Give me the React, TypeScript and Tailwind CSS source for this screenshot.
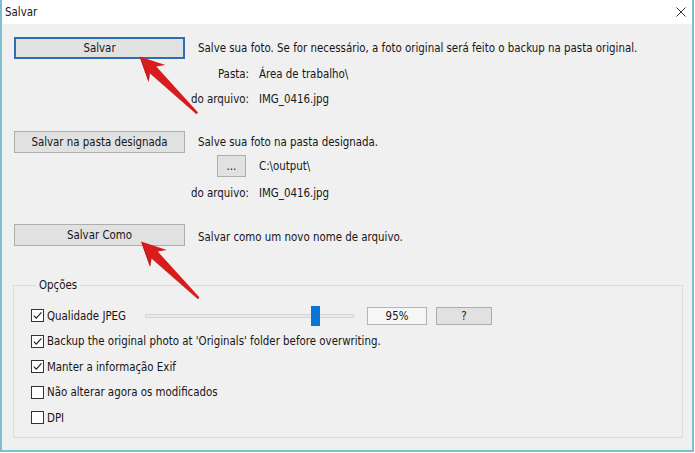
function Check({ checked }: { checked: boolean }) {
  return (
    <span className="w-[13px] h-[13px] border border-[#333] bg-white flex items-center justify-center shrink-0">
      {checked && (
        <svg width="11" height="11" viewBox="0 0 11 11">
          <polyline points="1.8,5.6 4.3,8.2 9.4,2.4" fill="none" stroke="#222" strokeWidth="1.2" />
        </svg>
      )}
    </span>
  );
}

function Row({ checked, label }: { checked: boolean; label: string }) {
  return (
    <div className="h-[25.5px] flex items-center">
      <Check checked={checked} />
      <span className="ml-[3px] whitespace-nowrap">{label}</span>
    </div>
  );
}

function Arrow({ x, y }: { x: number; y: number }) {
  return (
    <g transform={`translate(${x} ${y}) rotate(44.5)`}>
      <path d="M0 0 L24.5 -12 L19 -4.6 L81 -1.1 L81 1.1 L19 4.6 L24.5 12 Z" fill="#d81c1c" />
      <path d="M2 0.5 L23 10.5 L19 4.6 L81 1.1" fill="none" stroke="#a70f10" strokeWidth="0.8" opacity="0.6" />
    </g>
  );
}

export default function App() {
  return (
    <div className="w-[695px] h-[453px] bg-white relative">
      <div className="w-[694px] h-[452px] border-l-2 border-r-2 border-b-2 border-[#7cc0cd] flex flex-col font-['DejaVu_Sans',sans-serif] font-stretch-condensed text-[11.4px] text-[#161616] leading-[14px]">
        <div className="h-[24px] bg-white flex items-center justify-between pl-[3px] pr-[6px] shrink-0">
          <span>Salvar</span>
          <svg width="10" height="10" viewBox="0 0 10 10">
            <path d="M0.5 0.5 L9.5 9.5 M9.5 0.5 L0.5 9.5" stroke="#333" strokeWidth="1" />
          </svg>
        </div>
        <div className="flex-1 bg-[#f0f0f0] pt-[13px] pl-[12px] flex flex-col">
          <div className="h-[22px] flex items-center">
            <button className="w-[171px] h-[22px] border-2 border-[#2f6db5] bg-[#e1e1e1] flex items-center justify-center">Salvar</button>
            <span className="ml-[13px] whitespace-nowrap">Salve sua foto. Se for necessário, a foto original será feito o backup na pasta original.</span>
          </div>
          <div className="mt-[3px] h-[24px] flex items-center">
            <div className="w-[177px] shrink-0" />
            <div className="w-[58px] overflow-hidden flex justify-end whitespace-nowrap shrink-0">Pasta:</div>
            <span className="ml-[10px] whitespace-nowrap">Área de trabalho\</span>
          </div>
          <div className="mt-[1px] h-[24px] flex items-center">
            <div className="w-[177px] shrink-0" />
            <div className="w-[58px] overflow-hidden flex justify-end whitespace-nowrap shrink-0">Nome do arquivo:</div>
            <span className="ml-[10px] whitespace-nowrap">IMG_0416.jpg</span>
          </div>
          <div className="mt-[20px] h-[22px] flex items-center">
            <button className="w-[171px] h-[22px] border border-[#adadad] bg-[#e1e1e1] flex items-center justify-center">Salvar na pasta designada</button>
            <span className="ml-[13px] whitespace-nowrap">Salve sua foto na pasta designada.</span>
          </div>
          <div className="mt-[2px] h-[22px] flex items-center">
            <div className="w-[203px] shrink-0" />
            <button className="w-[29px] h-[22px] border border-[#adadad] bg-[#e1e1e1] flex items-center justify-center">...</button>
            <span className="ml-[13px] whitespace-nowrap">C:\output\</span>
          </div>
          <div className="mt-[4px] h-[24px] flex items-center">
            <div className="w-[177px] shrink-0" />
            <div className="w-[58px] overflow-hidden flex justify-end whitespace-nowrap shrink-0">Nome do arquivo:</div>
            <span className="ml-[10px] whitespace-nowrap">IMG_0416.jpg</span>
          </div>
          <div className="mt-[19px] h-[22px] flex items-center">
            <button className="w-[171px] h-[22px] border border-[#adadad] bg-[#e1e1e1] flex items-center justify-center">Salvar Como</button>
            <span className="ml-[13px] mt-[3px] whitespace-nowrap">Salvar como um novo nome de arquivo.</span>
          </div>
          <fieldset className="mt-[32px] -ml-px w-[670px] border border-[#dcdcdc] pt-[11px] pb-[6px] pl-[17px]">
            <legend className="ml-[5px] px-[3px] leading-[14px]">Opções</legend>
            <div className="h-[25.5px] flex items-center">
              <div className="w-[114px] flex items-center shrink-0">
                <Check checked={true} />
                <span className="ml-[3px] whitespace-nowrap">Qualidade JPEG</span>
              </div>
              <div className="relative w-[209px] h-[20px] flex items-center shrink-0">
                <div className="w-full h-[4px] border border-[#d6d6d6] bg-[#e9e9e9]" />
                <div className="absolute left-[166px] top-0 w-[9px] h-[20px] bg-[#0a74d6]" />
              </div>
              <div className="ml-[13px] w-[60px] h-[18px] border border-[#b4b4b4] bg-[#f6f6f6] flex items-center justify-center">95%</div>
              <button className="ml-[9px] w-[56px] h-[18px] border border-[#adadad] bg-[#e1e1e1] flex items-center justify-center">?</button>
            </div>
            <Row checked={true} label="Backup the original photo at 'Originals' folder before overwriting." />
            <Row checked={true} label="Manter a informação Exif" />
            <Row checked={false} label="Não alterar agora os modificados" />
            <Row checked={false} label="DPI" />
          </fieldset>
        </div>
      </div>
      <svg className="absolute left-0 top-0 pointer-events-none" width="695" height="453" viewBox="0 0 695 453">
        <Arrow x={139.5} y={56.5} />
        <Arrow x={141} y={241.5} />
      </svg>
    </div>
  );
}
